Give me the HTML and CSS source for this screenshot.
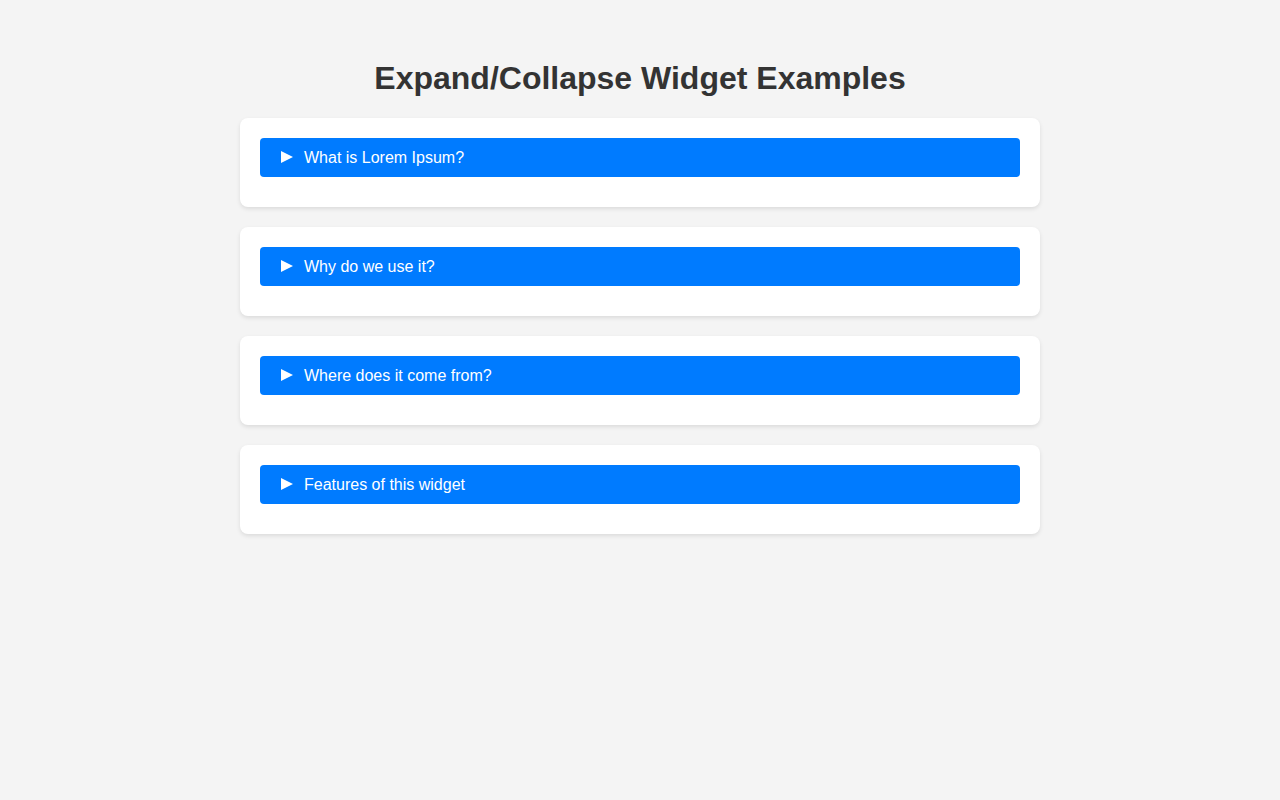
FILE: index.html
```html
<!DOCTYPE html>
<html lang="en">
<head>
<meta charset="utf-8">
<title>Expand/Collapse Widget Examples</title>
<link rel="stylesheet" href="styles.css">
</head>
<body>
<div class="container">
  <h1>Expand/Collapse Widget Examples</h1>
  <div class="card">
    <details>
      <summary>What is Lorem Ipsum?</summary>
      <p>Lorem Ipsum is simply dummy text of the printing and typesetting industry.</p>
    </details>
  </div>
  <div class="card">
    <details>
      <summary>Why do we use it?</summary>
      <p>It is a long established fact that a reader will be distracted by the readable content of a page.</p>
    </details>
  </div>
  <div class="card">
    <details>
      <summary>Where does it come from?</summary>
      <p>Contrary to popular belief, Lorem Ipsum is not simply random text.</p>
    </details>
  </div>
  <div class="card">
    <details>
      <summary>Features of this widget</summary>
      <ul>
        <li>Native HTML details and summary</li>
        <li>Keyboard accessible</li>
      </ul>
    </details>
  </div>
</div>
</body>
</html>
```

FILE: styles.css
```css
html, body {
  margin: 0;
  padding: 0;
}
body {
  background: #f4f4f4;
  font-family: "Liberation Sans", Arial, sans-serif;
  color: #333;
  padding: 20px;
}
.container {
  max-width: 800px;
  margin: 0 auto;
  padding-top: 40px;
}
h1 {
  text-align: center;
  font-size: 32px;
  line-height: 37px;
  font-weight: bold;
  color: #333;
  margin: 0 0 21px;
}
.card {
  background: #fff;
  border-radius: 8px;
  box-shadow: 0 2px 4px rgba(0, 0, 0, 0.1);
  padding: 20px;
  margin-bottom: 20px;
}
summary {
  display: flex;
  align-items: center;
  list-style: none;
  background: #007bff;
  color: #fff;
  padding: 10px 20px 10px 21px;
  border-radius: 4px;
  cursor: pointer;
  font-size: 16px;
  line-height: 19px;
  margin-bottom: 10px;
}
summary::-webkit-details-marker {
  display: none;
}
summary::before {
  content: "";
  display: block;
  width: 0;
  height: 0;
  border-left: 12px solid #fff;
  border-top: 6.5px solid transparent;
  border-bottom: 6.5px solid transparent;
  margin-right: 11px;
  margin-top: -1px;
}
details[open] summary::before {
  transform: rotate(90deg);
}
```
